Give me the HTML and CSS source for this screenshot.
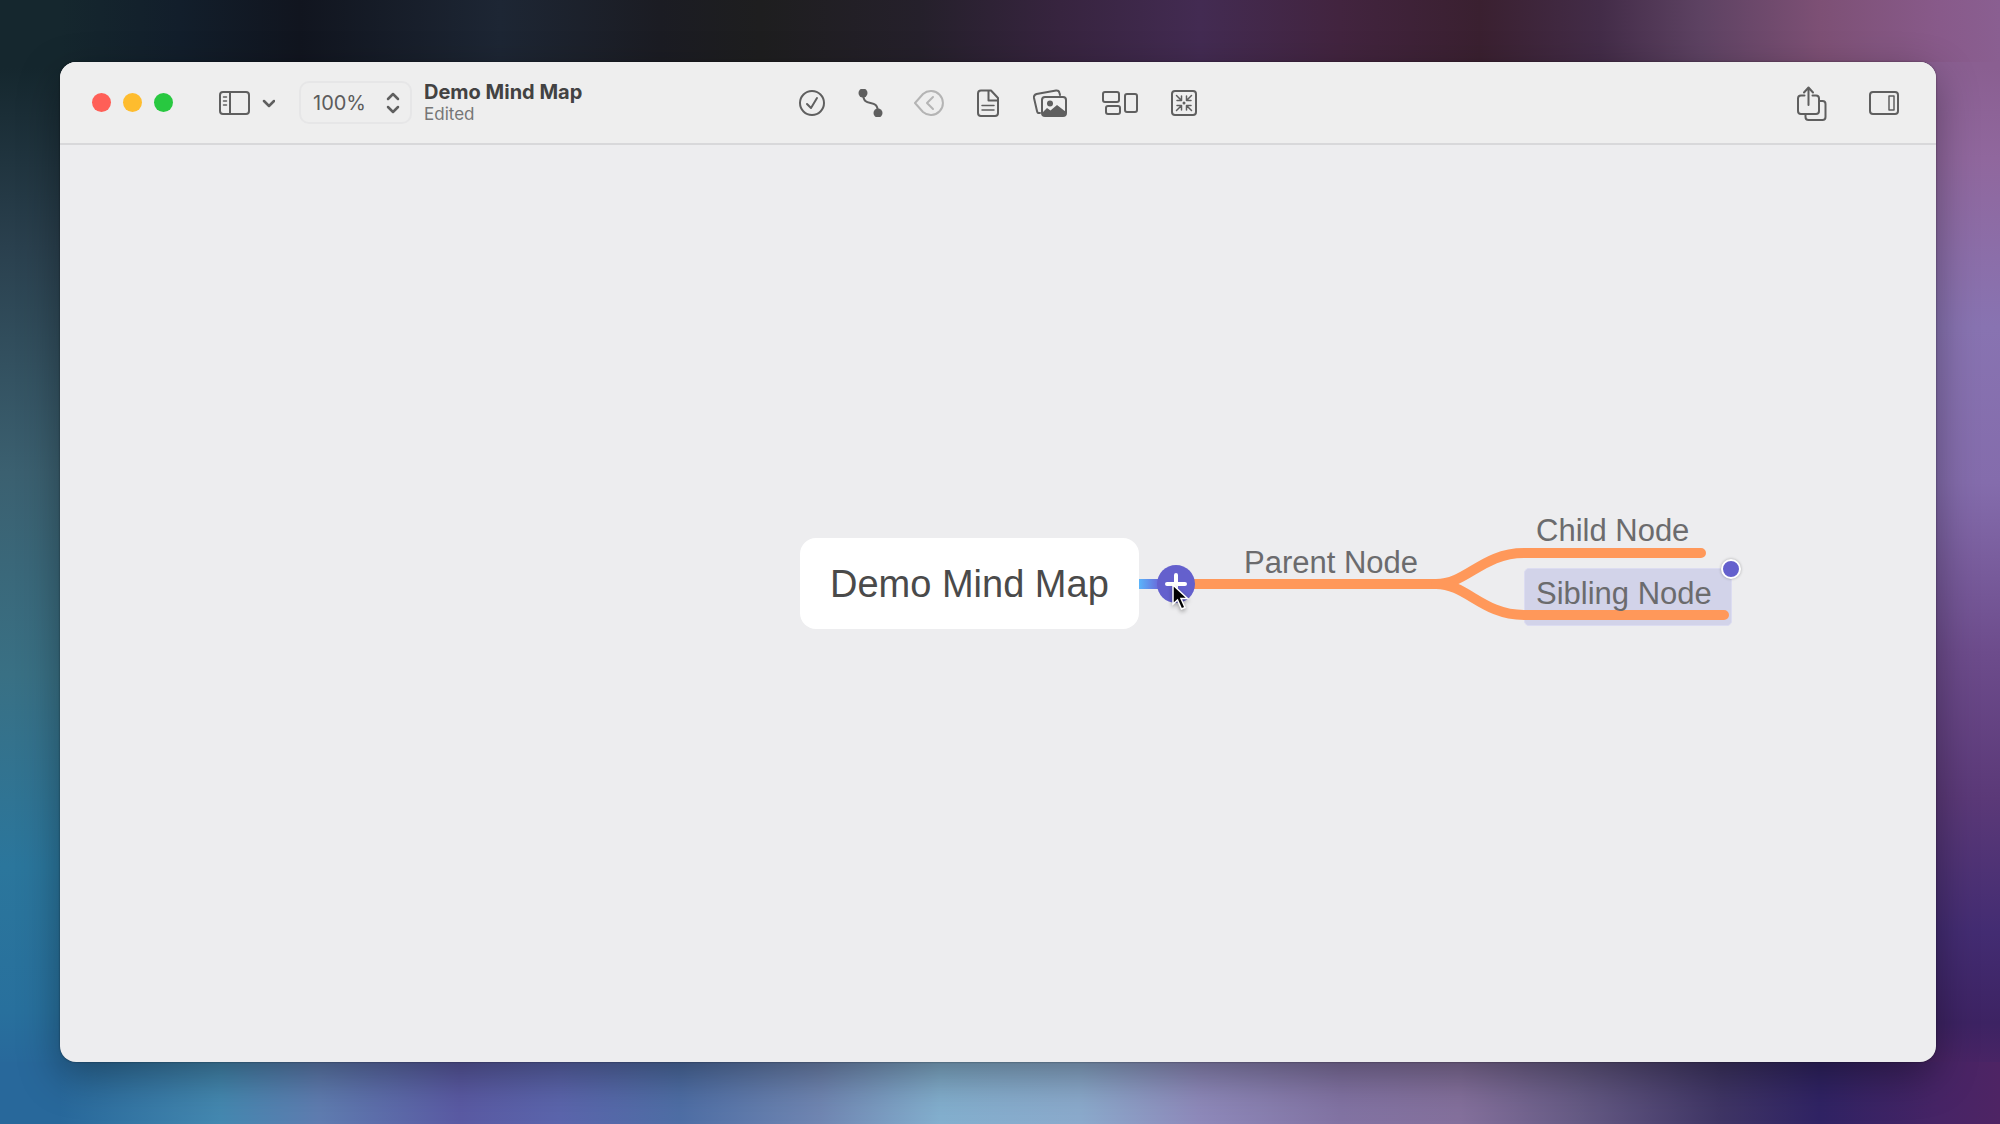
FILE: index.html
```html
<!DOCTYPE html>
<html lang="en">
<head>
    <meta charset="UTF-8">
    <meta name="viewport" content="width=device-width, initial-scale=1.0">
    <title>Demo Mind Map</title>
    <link rel="stylesheet" href="styles.css">
</head>
<body>
    <div class="window">
        <header class="toolbar">
            <div class="toolbar-left">
                <div class="window-controls">
                    <button class="light close" aria-label="Close"></button>
                    <button class="light minimize" aria-label="Minimize"></button>
                    <button class="light zoom" aria-label="Zoom"></button>
                </div>

                <button class="tool sidebar-toggle" aria-label="Sidebar">
                    <svg width="56" height="26" viewBox="0 0 56 26">
                        <rect x="1" y="2" width="29" height="22" rx="3"/>
                        <path d="M11 2v22"/>
                        <path class="thin" d="M4.500 7h3M4.500 11h3M4.500 15h3"/>
                        <path class="bold" d="M45 11l5 5 5-5"/>
                    </svg>
                </button>

                <div class="zoom-level">
                    <select aria-label="Zoom level">
                        <option>100%</option>
                    </select>
                    <svg width="14" height="22" viewBox="0 0 14 22">
                        <path class="bold" d="M2 7l5-5 5 5M2 15l5 5 5-5"/>
                    </svg>
                </div>

                <div class="document">
                    <h1>Demo Mind Map</h1>
                    <p>Edited</p>
                </div>
            </div>

            <div class="toolbar-center">
                <button class="tool" aria-label="Task">
                    <svg width="28" height="28" viewBox="0 0 28 28">
                        <circle cx="14" cy="14" r="12"/>
                        <path d="M9 15l4 4 6-10"/>
                    </svg>
                </button>
                <button class="tool" aria-label="Connection">
                    <svg width="28" height="28" viewBox="0 0 28 28">
                        <circle class="solid" cx="7" cy="4" r="4.500"/>
                        <circle class="solid" cx="22" cy="24" r="4.500"/>
                        <path d="M7 4C7 21 22 7 22 24"/>
                    </svg>
                </button>
                <button class="tool" aria-label="Fold" disabled>
                    <svg width="30" height="28" viewBox="0 0 30 28">
                        <path d="M1 14L9 5A12 12 0 1 1 9 23Z"/>
                        <path d="M19 8l-6 6 6 6"/>
                    </svg>
                </button>
                <button class="tool" aria-label="Note">
                    <svg width="28" height="28" viewBox="0 0 28 28">
                        <path d="M17 1.500H7Q4 1.500 4 4.500V24Q4 27 7 27H21Q24 27 24 24V9Z"/>
                        <path d="M14.500 2v9.500H24"/>
                        <path class="thin" d="M8 16.500h12M8 21h12"/>
                    </svg>
                </button>
                <button class="tool" aria-label="Image">
                    <svg width="36" height="28" viewBox="0 0 36 28">
                        <path d="M8 24Q5.500 24.500 5 22L2 9Q1.500 6 4.500 5L24 1.500Q27 1 27.500 4L28 6"/>
                        <rect x="10" y="8" width="24" height="19" rx="3"/>
                        <circle class="solid" cx="18" cy="14.500" r="3"/>
                        <path class="solid" d="M10 24L15 19L18.500 21.500L25 16L34 23V24Q34 27 31 27H13Q10 27 10 24Z"/>
                    </svg>
                </button>
                <button class="tool" aria-label="Layout">
                    <svg width="42" height="28" viewBox="0 0 42 28">
                        <rect x="5" y="3" width="16" height="10" rx="2"/>
                        <rect x="8" y="17" width="14" height="8" rx="2"/>
                        <rect x="27" y="5" width="12" height="18" rx="2"/>
                    </svg>
                </button>
                <button class="tool" aria-label="Focus">
                    <svg width="28" height="28" viewBox="0 0 28 28">
                        <rect x="2" y="2" width="24" height="24" rx="3"/>
                        <circle class="solid" cx="14" cy="14" r="1.500"/>
                        <path class="thin" d="M6.500 6.500l5 5M11.500 7v4.500H7M21.500 6.500l-5 5M16.500 7v4.500H21M6.500 21.500l5-5M11.500 21v-4.500H7M21.500 21.500l-5-5M16.500 21v-4.500H21"/>
                    </svg>
                </button>
            </div>

            <div class="toolbar-right">
                <button class="tool" aria-label="Share">
                    <svg width="32" height="38" viewBox="0 0 32 38">
                        <path d="M8.500 11.500H5Q2 11.500 2 14.500V27Q2 30 5 30H20Q23 30 23 27V14.500Q23 11.500 20 11.500H16.500"/>
                        <path d="M12.500 21V4M8 8.500l4.500-5 4.500 5"/>
                        <path d="M9.500 31V33Q9.500 36 12.500 36H26.500Q29.500 36 29.500 33V20Q29.500 17 26.500 17H24"/>
                    </svg>
                </button>
                <button class="tool" aria-label="Inspector">
                    <svg width="32" height="26" viewBox="0 0 32 26">
                        <rect x="2" y="2" width="28" height="22" rx="3"/>
                        <rect class="thin" x="21" y="6" width="5" height="14"/>
                    </svg>
                </button>
            </div>
        </header>

        <main class="canvas">
            <div class="selection"></div>

            <!-- Branches, in canvas coordinates -->
            <svg class="branches" width="1700" height="520" viewBox="0 0 1700 520">
                <defs>
                    <linearGradient id="stub" x1="0" x2="1">
                        <stop offset="0" stop-color="#5ab8fc"/>
                        <stop offset="1" stop-color="#6a66d8"/>
                    </linearGradient>
                </defs>
                <rect x="1078" y="434" width="22" height="10" fill="url(#stub)"/>
                <path d="M1132 439H1376C1407 439 1422 408 1464 408H1641"/>
                <path d="M1376 439C1407 439 1422 470 1464 470H1664"/>
            </svg>

            <div class="node root">Demo Mind Map</div>
            <div class="node topic parent">Parent Node</div>
            <div class="node topic child">Child Node</div>
            <div class="node topic sibling">Sibling Node</div>

            <span class="handle"></span>

            <button class="add" aria-label="Add node">
                <svg width="38" height="38" viewBox="0 0 38 38">
                    <path d="M19 10v18M10 19h18"/>
                </svg>
            </button>

            <svg class="cursor" width="20" height="30" viewBox="0 0 20 30">
                <path d="M2 2V21L6.500 17L10.500 26L14 24.500L10 15.500H16.500Z"/>
            </svg>
        </main>
    </div>
</body>
</html>
```

FILE: styles.css
```css
:root {
    --icon: #5f5f5f;
    --toolbar: #eeeeee;
    --canvas: #ededef;
    --branch: #ff985a;
    --accent: #6460cd;
}

* {
    box-sizing: border-box;
}

body {
    display: flex;
    height: 100vh;
    margin: 0;
    padding: 62px 64px 62px 60px;
    font-family: Inter, "Liberation Sans", sans-serif;
    background:
        linear-gradient(90deg, #15272e 0%, #15272e 3%, #121e2b 9%, #11151f 15%, #1d2634 25%, #1b1c23 33%, #1e1e1f 38%, #25202b 46%, #37243f 53%, #432b52 60%, #42243f 67%, #3a2030 74%, #432c48 80%, #5d4262 85%, #7d5075 91%, #885a8a 97%, #8a5f91 100%) top / 100% 62px no-repeat,
        linear-gradient(90deg, #28689b 0%, #28689b 3%, #4488b0 11%, #5f7cb0 16%, #5a5aa3 23%, #5b65ac 28%, #4e6ea5 34%, #7086b2 41%, #83afce 47%, #8baacc 54%, #8e89ba 60%, #8273a3 67%, #84709c 73%, #655a84 79%, #3f3565 86%, #302364 91%, #472466 97%, #4e2464 100%) bottom / 100% 62px no-repeat,
        linear-gradient(#15272e, #15272e 6%, #2a404e 22%, #3b6070 42%, #397084 60%, #2b769c 77%, #28709d 90%, #28689b 95%) left / 50% 100% no-repeat,
        linear-gradient(#8a5f91, #8a5f91 6%, #90679d 14%, #8873b1 29%, #846cac 43%, #6d4c8c 58%, #5b3978 71%, #432c72 83%, #3d2363 91%, #4a2465 95%) right / 50% 100% no-repeat;
}

h1,
p {
    margin: 0;
}

button {
    padding: 0;
    border: none;
    background: none;
}

svg {
    display: block;
}

.window {
    display: flex;
    flex: 1;
    flex-direction: column;
    overflow: hidden;
    border-radius: 16px;
    background: var(--canvas);
    box-shadow: 0 0 2px rgba(0, 0, 0, 0.5), 0 14px 40px rgba(0, 0, 0, 0.35);
}

/* Toolbar */

.toolbar {
    display: grid;
    grid-template-columns: 1fr auto 1fr;
    align-items: center;
    height: 83px;
    padding: 0 32px;
    border-bottom: 2px solid #d8d8da;
    background: var(--toolbar);
}

.toolbar-left,
.toolbar-center,
.toolbar-right,
.window-controls,
.zoom-level {
    display: flex;
    align-items: center;
}

.toolbar-center {
    gap: 30px;
}

.toolbar-right {
    gap: 40px;
    justify-content: flex-end;
    padding-right: 4px;
}

.window-controls {
    gap: 12px;
}

.light {
    width: 19px;
    height: 19px;
    border-radius: 50%;
}

.close {
    background: #ff5f57;
}

.minimize {
    background: #febc2e;
}

.zoom {
    background: #28c840;
}

.tool path,
.tool rect,
.tool circle,
.zoom-level path {
    fill: none;
    stroke: var(--icon);
    stroke-width: 2;
    stroke-linecap: round;
    stroke-linejoin: round;
}

.tool .thin {
    stroke-width: 1.5;
}

.tool .bold,
.zoom-level .bold {
    stroke-width: 2.5;
}

.tool .solid {
    fill: var(--icon);
    stroke: none;
}

.tool:disabled {
    opacity: 0.4;
}

.sidebar-toggle {
    margin-left: 46px;
}

.zoom-level {
    position: relative;
    margin-left: 24px;
}

.zoom-level select {
    width: 113px;
    height: 43px;
    padding: 0 12px;
    appearance: none;
    border: 2px solid #e6e6e7;
    border-radius: 10px;
    background: transparent;
    color: #5c5c5c;
    font-family: inherit;
    font-size: 20px;
}

.zoom-level svg {
    position: absolute;
    right: 12px;
    pointer-events: none;
}

.document {
    margin-left: 12px;
    white-space: nowrap;
}

.document h1 {
    color: #424242;
    font-size: 20px;
    font-weight: 700;
    line-height: 24px;
}

.document p {
    color: #767676;
    font-size: 17px;
    line-height: 21px;
}

/* Mind map */

.canvas {
    position: relative;
    flex: 1;
    font-family: "Liberation Sans", Arial, sans-serif;
}

.branches {
    position: absolute;
    top: 0;
    left: 0;
}

.branches path {
    fill: none;
    stroke: var(--branch);
    stroke-width: 10;
    stroke-linecap: round;
}

.node {
    position: absolute;
    white-space: nowrap;
}

.root {
    top: 393px;
    left: 740px;
    padding: 25px 30px 23px;
    border-radius: 16px;
    background: #ffffff;
    color: #4a4a4a;
    font-size: 38px;
    line-height: 43px;
}

.topic {
    color: #6b6b6d;
    font-size: 31px;
    line-height: 36px;
}

.parent {
    top: 400px;
    left: 1184px;
}

.child {
    top: 368px;
    left: 1476px;
}

.sibling {
    top: 431px;
    left: 1476px;
}

.selection {
    position: absolute;
    top: 423px;
    left: 1464px;
    width: 208px;
    height: 58px;
    border: 1px solid #dcdcf1;
    border-radius: 5px;
    background: #d2d3e9;
}

.handle {
    position: absolute;
    top: 414px;
    left: 1661px;
    width: 20px;
    height: 20px;
    border: 2px solid #ffffff;
    border-radius: 50%;
    background: var(--accent);
    box-shadow: 0 0 3px rgba(0, 0, 0, 0.3);
}

.add {
    position: absolute;
    top: 420px;
    left: 1097px;
    width: 38px;
    height: 38px;
    border-radius: 50%;
    background: var(--accent);
}

.add path {
    stroke: #ffffff;
    stroke-width: 4;
    stroke-linecap: round;
}

.cursor {
    position: absolute;
    top: 438px;
    left: 1111px;
    filter: drop-shadow(0 2px 2px rgba(0, 0, 0, 0.35));
}

.cursor path {
    fill: #000000;
    stroke: #ffffff;
    stroke-width: 1.5;
}
```
